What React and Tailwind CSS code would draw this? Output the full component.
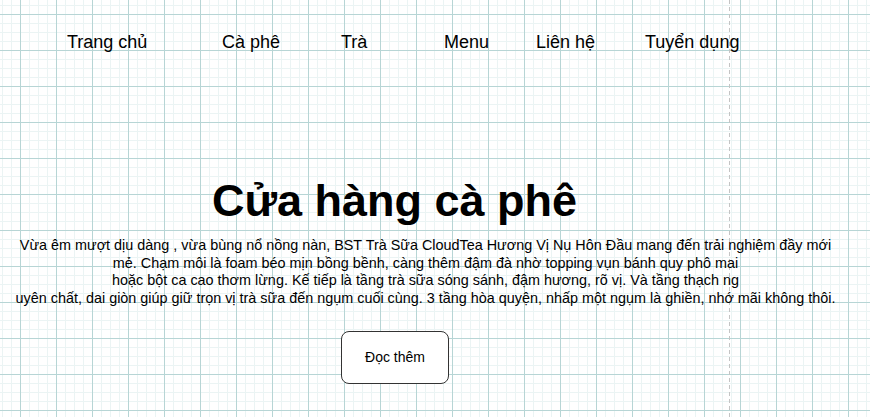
export default function App() {
    const navItems = [
        {label: "Trang chủ", w: "w-[155px]"},
        {label: "Cà phê", w: "w-[119px]"},
        {label: "Trà", w: "w-[103px]"},
        {label: "Menu", w: "w-[92px]"},
        {label: "Liên hệ", w: "w-[109px]"},
        {label: "Tuyển dụng", w: "w-auto"},
    ]

    return (
        <div
            className="relative w-[870px] h-[417px] overflow-hidden bg-white text-black font-['Liberation_Sans',Arial,sans-serif] bg-[linear-gradient(to_right,#b7d5d5_1px,transparent_1px),linear-gradient(to_bottom,#b7d5d5_1px,transparent_1px),linear-gradient(to_right,#ebf4f4_1px,transparent_1px),linear-gradient(to_bottom,#ebf4f4_1px,transparent_1px)] bg-[size:36px_36px,36px_36px,9px_9px,9px_9px] bg-[position:20px_14px,20px_14px,20px_14px,20px_14px]">
            {/* page boundary */}
            <div className="absolute top-0 left-[729px] w-px h-full bg-[linear-gradient(to_bottom,#c4c4c4_4px,transparent_4px)] bg-[size:1px_7px]"></div>

            <nav className="relative flex pl-[67px] pt-[32px] text-[18px] leading-[20px] whitespace-nowrap">
                {navItems.map((item) => (
                    <a key={item.label} href="#" className={item.w}>{item.label}</a>
                ))}
            </nav>

            <h1 className="relative mt-[124px] pr-[81px] text-center text-[45px] leading-[50px] font-bold">
                Cửa hàng cà phê
            </h1>

            <p className="relative mt-[11px] pr-[19px] text-center text-[14.4px] leading-[17.5px] whitespace-nowrap">
                Vừa êm mượt dịu dàng , vừa bùng nổ nồng nàn, BST Trà Sữa CloudTea Hương Vị Nụ Hôn Đầu mang đến trải nghiệm đầy mới<br/>
                mẻ. Chạm môi là foam béo mịn bồng bềnh, càng thêm đậm đà nhờ topping vụn bánh quy phô mai<br/>
                hoặc bột ca cao thơm lừng. Kế tiếp là tầng trà sữa sóng sánh, đậm hương, rõ vị. Và tầng thạch ng<br/>
                uyên chất, dai giòn giúp giữ trọn vị trà sữa đến ngụm cuối cùng. 3 tầng hòa quyện, nhấp một ngụm là ghiền, nhớ mãi không thôi.
            </p>

            <button className="relative mt-[24px] ml-[341px] w-[108px] h-[53px] rounded-[8px] border border-[#333] bg-white text-[14px] flex items-center justify-center">
                Đọc thêm
            </button>
        </div>
    )
}
